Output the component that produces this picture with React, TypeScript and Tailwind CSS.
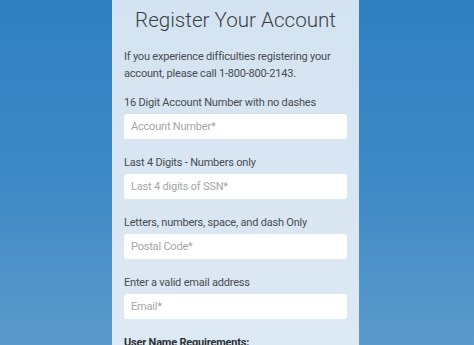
const fields = [
  { label: '16 Digit Account Number with no dashes', placeholder: 'Account Number*' },
  { label: 'Last 4 Digits - Numbers only', placeholder: 'Last 4 digits of SSN*' },
  { label: 'Letters, numbers, space, and dash Only', placeholder: 'Postal Code*' },
  { label: 'Enter a valid email address', placeholder: 'Email*' },
];

export default function App() {
  return (
    <div className="w-[474px] h-[345px] overflow-hidden bg-gradient-to-b from-[#2f7fc1] via-[#3d88c6] to-[#5b9acb] font-['Roboto',sans-serif]">
      <div className="ml-[112px] w-[247px] h-full bg-gradient-to-b from-[#d4e3f1] to-[#dde9f4] px-3 pt-[6px]">
        <h1 className="text-center text-[20.6px] leading-[28px] font-light text-[#3a3f44]">Register Your Account</h1>

        <p className="mt-[14px] text-[11px] tracking-[-0.2px] leading-[17px] text-[#474b50]">
          If you experience difficulties registering your account, please call 1-800-800-2143.
        </p>

        <div className="mt-[12px] flex flex-col gap-[15px]">
          {fields.map((f) => (
            <div key={f.placeholder}>
              <label className="block text-[11px] tracking-[-0.2px] leading-[17px] text-[#474b50]">{f.label}</label>
              <input
                type="text"
                placeholder={f.placeholder}
                className="mt-[3px] block w-full h-[25px] rounded-[3px] bg-white px-[7px] text-[11px] tracking-[-0.2px] text-[#333] placeholder:text-[#a3a6a9] outline-none"
              />
            </div>
          ))}
        </div>

        <p className="mt-[15px] text-[11px] tracking-[-0.2px] leading-[17px] font-bold text-[#2e3236]">User Name Requirements:</p>
      </div>
    </div>
  );
}
